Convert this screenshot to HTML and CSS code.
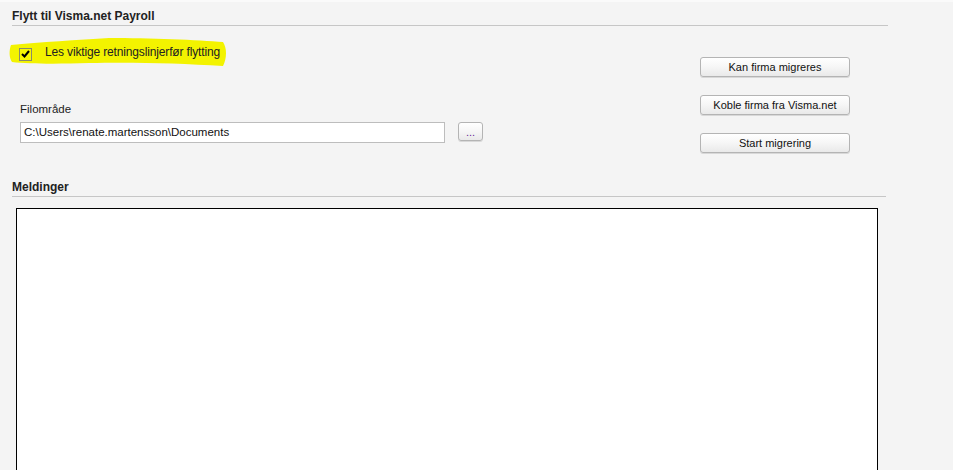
FILE: index.html
```html
<!DOCTYPE html>
<html lang="no">
<head>
<meta charset="utf-8">
<title>Flytt til Visma.net Payroll</title>
<link rel="stylesheet" href="styles.css">
</head>
<body>
<div class="page">
  <div class="section-title">Flytt til Visma.net Payroll</div>
  <div class="main">
    <div class="left">
      <div class="check-row">
        <svg class="highlight" width="220" height="30" viewBox="0 0 220 30" aria-hidden="true">
          <path d="M2 7 C 30 4, 70 2, 100 0 C 140 0, 190 2, 214 4 C 218 10, 218 20, 214 28 C 170 25, 120 24, 80 25 C 50 26, 20 26, 3 24 C 0 20, 0 12, 2 7 Z" fill="#f3f300"/>
        </svg>
        <span class="checkbox"><svg width="9" height="8" viewBox="0 0 9 8"><path d="M1 4 L3.5 6.5 L8 1" fill="none" stroke="#000" stroke-width="2"/></svg></span>
        <span class="check-label">Les viktige retningslinjerfør flytting</span>
      </div>
      <div class="field-label">Filområde</div>
      <div class="field-row">
        <div class="text-input">C:\Users\renate.martensson\Documents</div>
        <button class="btn btn-small">...</button>
      </div>
    </div>
    <div class="actions">
      <button class="btn btn-wide">Kan firma migreres</button>
      <button class="btn btn-wide">Koble firma fra Visma.net</button>
      <button class="btn btn-wide">Start migrering</button>
    </div>
  </div>
  <div class="section-title section-title-2">Meldinger</div>
  <div class="messages"></div>
</div>
</body>
</html>
```
FILE: styles.css
```css
html, body {
  margin: 0;
  padding: 0;
  background: #f4f4f4;
  height: 100%;
  overflow: hidden;
}
body {
  font-family: "Liberation Sans", Arial, sans-serif;
  color: #1a1a1a;
  border-top: 2px solid #fafafa;
}
.page {
  width: 876px;
  padding-left: 12px;
}
.section-title {
  font-size: 12px;
  font-weight: bold;
  line-height: 14px;
  padding: 7px 0 2px;
  border-bottom: 1px solid #c6c6c6;
  color: #222;
}
.main {
  display: flex;
  height: 154px;
}
.left {
  flex: 1;
  padding-left: 8px;
}
.check-row {
  position: relative;
  display: flex;
  align-items: center;
  margin-top: 21px;
  height: 14px;
}
.highlight {
  position: absolute;
  left: -11px;
  top: -9px;
  z-index: 0;
}
.checkbox {
  position: relative;
  z-index: 1;
  margin-left: -1px;
  width: 11px;
  height: 11px;
  border: 1px solid #8a8a6a;
  background: #f8f800;
  display: flex;
  align-items: center;
  justify-content: center;
}
.check-label {
  position: relative;
  z-index: 1;
  top: -2px;
  margin-left: 13px;
  font-size: 12px;
  letter-spacing: -0.15px;
  color: #222;
}
.field-label {
  margin-top: 41px;
  font-size: 11.5px;
  line-height: 14px;
  color: #222;
}
.field-row {
  display: flex;
  align-items: flex-start;
  margin-top: 6px;
}
.text-input {
  width: 420px;
  height: 19px;
  line-height: 19px;
  padding-left: 3px;
  background: #fff;
  border: 1px solid #bdbdbd;
  font-size: 11.5px;
  color: #111;
}
.btn {
  font-family: "Liberation Sans", Arial, sans-serif;
  font-size: 11px;
  color: #111;
  background: linear-gradient(#ffffff, #f6f6f6 50%, #e9e9e9);
  border: 1px solid #b4b4b4;
  border-radius: 3px;
  box-shadow: 0 1px 0 #d8d8d8;
  padding: 0;
  cursor: pointer;
}
.btn-small {
  margin-left: 13px;
  width: 25px;
  height: 19px;
  color: #6a2c9a;
  line-height: 14px;
}
.actions {
  width: 150px;
  margin-right: 38px;
  padding-top: 31px;
  display: flex;
  flex-direction: column;
  gap: 18px;
}
.btn-wide {
  width: 150px;
  height: 20px;
}
.section-title-2 {
  padding-top: 0;
  margin-right: 2px;
}
.messages {
  margin: 11px 0 0 4px;
  width: 860px;
  height: 300px;
  background: #fff;
  border: 1px solid #000;
}
```
